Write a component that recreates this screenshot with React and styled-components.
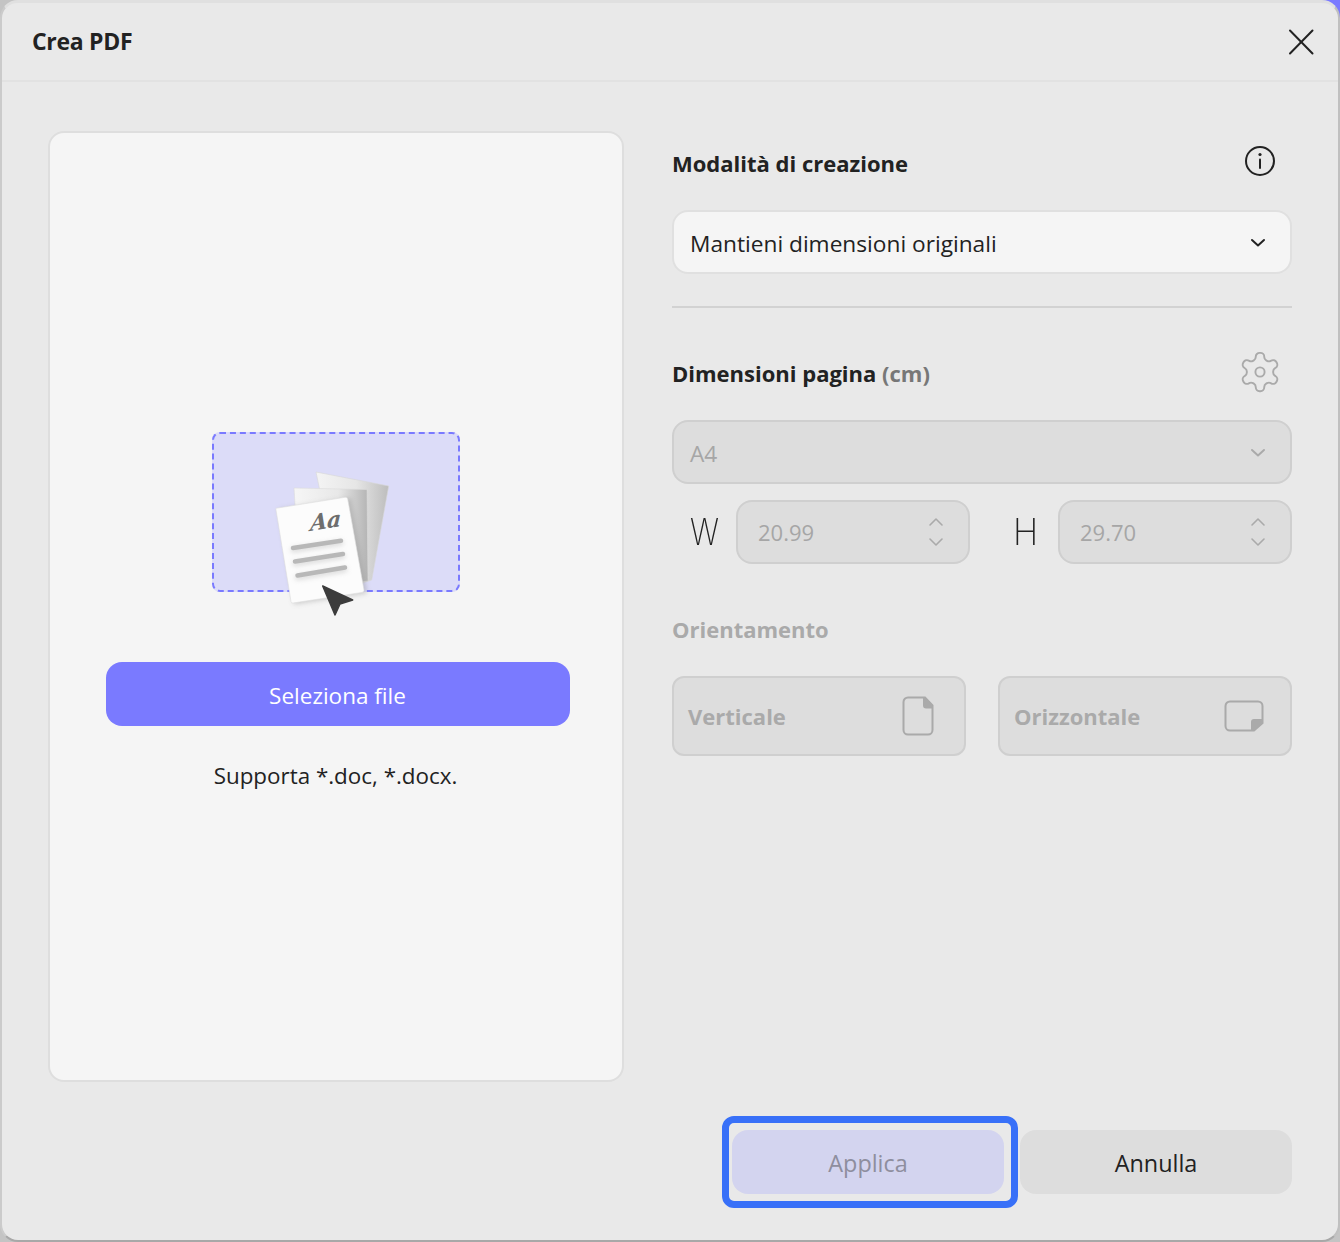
import React from 'react';
import styled, { createGlobalStyle } from 'styled-components';

const GlobalStyle = createGlobalStyle`
  html, body {
    margin: 0;
    padding: 0;
    background: #c4c4c4;
    font-family: 'Open Sans', 'Noto Sans', sans-serif;
  }
  * { box-sizing: border-box; }
`;

const Page = styled.div`
  position: relative;
  width: 1340px;
  height: 1242px;
  overflow: hidden;
  background: #c4c4c4;

  &::before {
    content: '';
    position: absolute;
    top: 0;
    right: 0;
    width: 20px;
    height: 20px;
    background: #7a7aff;
  }
`;

const Window = styled.div`
  position: relative;
  display: flex;
  flex-direction: column;
  height: 100%;
  background: #e9e9e9;
  border-style: solid;
  border-width: 3px 2px 2px 2px;
  border-color: #e0e0e0 #c0c0c0 #a8a8a8 #cbcbcb;
  border-radius: 18px;
`;

const Header = styled.header`
  display: flex;
  align-items: center;
  justify-content: space-between;
  height: 79px;
  padding: 0 24px 0 30px;
  border-bottom: 2px solid #e2e2e2;
`;

const Title = styled.h1`
  margin: -2px 0 0;
  font-size: 23px;
  font-weight: 700;
  letter-spacing: -0.3px;
  color: #222;
`;

const IconButton = styled.button`
  display: flex;
  padding: 0;
  border: 0;
  background: none;
  margin: ${p => p.$margin || 0};
`;

const Content = styled.div`
  flex: 1;
  display: flex;
  gap: 48px;
  padding: 49px 46px 46px 46px;
`;

const UploadPanel = styled.section`
  flex: none;
  width: 576px;
  height: 951px;
  display: flex;
  flex-direction: column;
  align-items: center;
  padding: 299px 1px 0 0;
  background: #f5f5f5;
  border: 2px solid #dedede;
  border-radius: 16px;
`;

const DropZone = styled.div`
  position: relative;
  width: 248px;
  height: 160px;
  background: #dcdcf8;
  border: 2px dashed #7a7aff;
  border-radius: 8px;
`;

const Illustration = styled.svg`
  position: absolute;
  left: 46px;
  top: 31px;
  width: 140px;
  height: 160px;
`;

const SelectFile = styled.button`
  width: 464px;
  height: 64px;
  margin: 70px 0 0 4px;
  padding: 2px 0 0;
  border: 0;
  border-radius: 16px;
  background: #7a7aff;
  color: #fff;
  font: 400 22.5px 'Open Sans', sans-serif;
`;

const Hint = styled.p`
  margin: 34px 0 0;
  font-size: 22.4px;
  line-height: 32px;
  color: #222;
`;

const Side = styled.section`
  flex: 1;
  display: flex;
  flex-direction: column;
  padding-top: 15px;
`;

const SectionHead = styled.div`
  display: flex;
  align-items: center;
  justify-content: space-between;
  height: 34px;
  padding-right: 15px;
  margin-top: ${p => p.$top || 0}px;
  margin-bottom: ${p => p.$bottom || 0}px;
`;

const Label = styled.h2`
  margin: 0;
  font-size: 22px;
  font-weight: 700;
  color: ${p => (p.$muted ? '#aaa' : '#222')};

  span { color: #777; }
`;

const Field = styled.div`
  display: flex;
  align-items: center;
  justify-content: space-between;
  height: 64px;
  padding: 2px 24px 0 16px;
  border: 2px solid ${p => (p.$disabled ? '#cfcfcf' : '#e0e0e0')};
  border-radius: 16px;
  background: ${p => (p.$disabled ? '#dddddd' : '#f5f5f5')};
  color: ${p => (p.$disabled ? '#a6a6a6' : '#222')};
  font-size: 22.7px;
`;

const Divider = styled.hr`
  width: 100%;
  margin: 32px 0 0;
  border: 0;
  border-top: 2px solid #d2d2d2;
`;

const SizeRow = styled.div`
  display: flex;
  align-items: center;
  margin-top: 16px;
`;

const Axis = styled.span`
  flex: none;
  width: ${p => p.$width}px;
  padding-left: ${p => p.$pad}px;
  font: 200 36px/1 'Inter', sans-serif;
  color: #222;
  transform-origin: ${p => p.$pad}px 50%;
  transform: scaleX(${p => p.$squeeze});
`;

const NumberField = styled(Field)`
  flex: 1;
  padding: 0 24px 0 20px;
  font-size: 22px;
`;

const Stepper = styled.svg`
  width: 16px;
  height: 32px;
`;

const Orientations = styled.div`
  display: flex;
  gap: 32px;
  margin-top: 30px;
`;

const OrientButton = styled.div`
  flex: none;
  width: 294px;
  display: flex;
  align-items: center;
  justify-content: space-between;
  height: 80px;
  padding: 0 ${p => p.$pad}px 0 14px;
  border: 2px solid #cfcfcf;
  border-radius: 12px;
  background: #dddddd;
  color: #aaa;
  font-size: 22px;
  font-weight: 700;
`;

const Footer = styled.div`
  display: flex;
  gap: 16px;
  margin-top: auto;
  padding-left: 60px;
`;

const Action = styled.button`
  position: relative;
  flex: 1;
  height: 64px;
  padding: 2px 0 0;
  border: 0;
  border-radius: 16px;
  background: ${p => (p.$primary ? '#d3d4ef' : '#dddddd')};
  color: ${p => (p.$primary ? '#8e8e9e' : '#222')};
  font: 400 23.4px 'Open Sans', sans-serif;
`;

const FocusRing = styled.span`
  position: absolute;
  inset: -14px -14px -14px -10px;
  border: 7px solid #3870f8;
  border-radius: 12px;
`;

const Chevron = ({ color }) => (
  <svg width="16" height="10" viewBox="0 0 16 10" fill="none" stroke={color} strokeWidth="2" strokeLinecap="round" strokeLinejoin="round">
    <path d="M2 2l6 5.5L14 2" />
  </svg>
);

const StepperIcon = () => (
  <Stepper viewBox="0 0 16 32" fill="none" stroke="#aaa" strokeWidth="1.6" strokeLinecap="round" strokeLinejoin="round">
    <path d="M2 9l6-6 6 6" />
    <path d="M2 23l6 6 6-6" />
  </Stepper>
);

const PageArt = () => (
  <Illustration viewBox="260 465 140 160" aria-hidden="true">
    <defs>
      <linearGradient id="backSheet" x1="0" y1="0" x2="1" y2="0">
        <stop offset="0" stopColor="#f4f4f4" />
        <stop offset="0.55" stopColor="#e6e6e6" />
        <stop offset="1" stopColor="#bdbdbd" />
      </linearGradient>
      <linearGradient id="midSheet" x1="0" y1="0" x2="1" y2="0">
        <stop offset="0" stopColor="#f6f6f6" />
        <stop offset="0.6" stopColor="#e8e8e8" />
        <stop offset="1" stopColor="#b4b4b4" />
      </linearGradient>
      <filter id="soft" x="-20%" y="-20%" width="140%" height="140%">
        <feGaussianBlur stdDeviation="2.5" />
      </filter>
    </defs>
    <path d="M316 472L388.7 486L371.7 580L340 590Z" fill="url(#backSheet)" stroke="#d6d6d6" strokeWidth="0.6" strokeLinejoin="round" />
    <path d="M294 488L367 489.5L368 581L300 590Z" fill="url(#midSheet)" stroke="#dcdcdc" strokeWidth="0.6" strokeLinejoin="round" />
    <path d="M276 508.3L347.7 497L364 592.3L291 603.3Z" fill="#8a8a8a" opacity="0.4" filter="url(#soft)" transform="translate(3 1)" />
    <path d="M276 508.3L345 497.3Q347.3 497 347.7 499L364 590Q364.3 592 362 592.4L293 603Q291.2 603.3 291 601.5L276 510Q275.8 508.5 276 508.3Z" fill="#fcfcfc" stroke="#dedede" strokeWidth="0.6" />
    <g stroke="#9a9a9a" strokeWidth="5" strokeLinecap="round" opacity="0.35" filter="url(#soft)">
      <path d="M293 550L341 542.8" />
      <path d="M295 563.5L343 556" />
      <path d="M297.5 577.5L345 569.5" />
    </g>
    <text x="0" y="0" transform="translate(310 531) rotate(-9) skewX(-12)" fontFamily="'DejaVu Serif', serif" fontStyle="italic" fontWeight="700" fontSize="22" fill="#6e6e6e">Aa</text>
    <g stroke="#b8b8b8" strokeWidth="4.5" strokeLinecap="round">
      <path d="M293 548L341 540.8" />
      <path d="M295 561.5L343 554" />
      <path d="M297.5 575.5L345 567.5" />
    </g>
    <path d="M322.7 586L352.7 600L340 604L335 615Z" fill="#3c3c3c" stroke="#3c3c3c" strokeWidth="1.5" strokeLinejoin="round" />
  </Illustration>
);

export default function App() {
  return (
    <Page>
      <GlobalStyle />
      <Window>
        <Header>
          <Title>Crea PDF</Title>
          <IconButton aria-label="Chiudi">
            <svg width="26" height="26" viewBox="0 0 26 26" fill="none" stroke="#222" strokeWidth="2" strokeLinecap="round">
              <path d="M2 1.5l22.5 23" />
              <path d="M24.5 1.5L2 24.5" />
            </svg>
          </IconButton>
        </Header>
        <Content>
          <UploadPanel>
            <DropZone>
              <PageArt />
            </DropZone>
            <SelectFile>Seleziona file</SelectFile>
            <Hint>Supporta *.doc, *.docx.</Hint>
          </UploadPanel>
          <Side>
            <SectionHead $bottom={30}>
              <Label>Modalità di creazione</Label>
              <IconButton aria-label="Info" $margin="-4px 1px 0 0">
                <svg width="32" height="32" viewBox="0 0 32 32" fill="none" stroke="#222" strokeWidth="2" strokeLinecap="round">
                  <circle cx="16" cy="16" r="14" />
                  <path d="M16 14.5V23" />
                  <circle cx="16" cy="9.5" r="1.6" fill="#222" stroke="none" />
                </svg>
              </IconButton>
            </SectionHead>
            <Field>
              Mantieni dimensioni originali
              <Chevron color="#222" />
            </Field>
            <Divider />
            <SectionHead $top={48} $bottom={30}>
              <Label>Dimensioni pagina <span>(cm)</span></Label>
              <IconButton aria-label="Impostazioni" $margin="-2px -6px 0 0">
                <svg width="46" height="46" viewBox="0 0 24 24" fill="none" stroke="#aaa" strokeWidth="1" strokeLinecap="round" strokeLinejoin="round">
                  <path d="M12.22 2h-.44a2 2 0 0 0-2 2v.18a2 2 0 0 1-1 1.73l-.43.25a2 2 0 0 1-2 0l-.15-.08a2 2 0 0 0-2.73.73l-.22.38a2 2 0 0 0 .73 2.73l.15.1a2 2 0 0 1 1 1.72v.51a2 2 0 0 1-1 1.74l-.15.09a2 2 0 0 0-.73 2.73l.22.38a2 2 0 0 0 2.73.73l.15-.08a2 2 0 0 1 2 0l.43.25a2 2 0 0 1 1 1.73V20a2 2 0 0 0 2 2h.44a2 2 0 0 0 2-2v-.18a2 2 0 0 1 1-1.73l.43-.25a2 2 0 0 1 2 0l.15.08a2 2 0 0 0 2.73-.73l.22-.39a2 2 0 0 0-.73-2.73l-.15-.08a2 2 0 0 1-1-1.74v-.5a2 2 0 0 1 1-1.74l.15-.09a2 2 0 0 0 .73-2.73l-.22-.38a2 2 0 0 0-2.73-.73l-.15.08a2 2 0 0 1-2 0l-.43-.25a2 2 0 0 1-1-1.73V4a2 2 0 0 0-2-2z" />
                  <circle cx="12" cy="12" r="2.4" />
                </svg>
              </IconButton>
            </SectionHead>
            <Field $disabled>
              A4
              <Chevron color="#aaa" />
            </Field>
            <SizeRow>
              <Axis $width={64} $pad={18} $squeeze={0.85}>W</Axis>
              <NumberField $disabled>
                20.99
                <StepperIcon />
              </NumberField>
              <Axis $width={88} $pad={43} $squeeze={0.95}>H</Axis>
              <NumberField $disabled>
                29.70
                <StepperIcon />
              </NumberField>
            </SizeRow>
            <SectionHead $top={48}>
              <Label $muted>Orientamento</Label>
            </SectionHead>
            <Orientations>
              <OrientButton $pad={30}>
                Verticale
                <svg width="32" height="40" viewBox="0 0 32 40" fill="none">
                  <path d="M6 1.5h17l7.5 8V34a4.5 4.5 0 0 1-4.5 4.5H6A4.5 4.5 0 0 1 1.5 34V6A4.5 4.5 0 0 1 6 1.5z" stroke="#aaa" strokeWidth="2" />
                  <path d="M21 1.5h2l7.5 8v3H24a3 3 0 0 1-3-3z" fill="#aaa" />
                </svg>
              </OrientButton>
              <OrientButton $pad={26}>
                Orizzontale
                <svg width="40" height="32" viewBox="0 0 40 32" fill="none">
                  <path d="M6 1.5h28A4.5 4.5 0 0 1 38.5 6v17L30 30.5H6A4.5 4.5 0 0 1 1.5 26V6A4.5 4.5 0 0 1 6 1.5z" stroke="#aaa" strokeWidth="2" />
                  <path d="M38.5 19v4L30 30.5h-3V22a3 3 0 0 1 3-3z" fill="#aaa" />
                </svg>
              </OrientButton>
            </Orientations>
            <Footer>
              <Action $primary>
                Applica
                <FocusRing />
              </Action>
              <Action>Annulla</Action>
            </Footer>
          </Side>
        </Content>
      </Window>
    </Page>
  );
}
